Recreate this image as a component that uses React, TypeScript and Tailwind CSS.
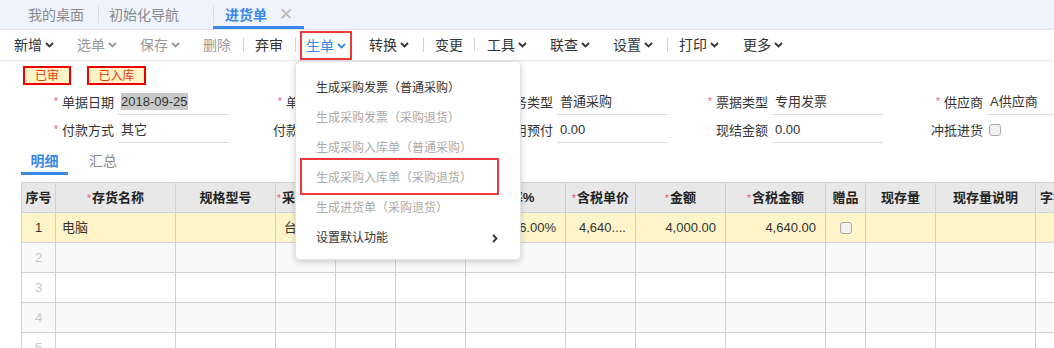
import React from "react";

const ChevronDown: React.FC<{ className?: string }> = ({ className }) => (
  <svg width="9" height="6" viewBox="0 0 9 6" className={className}>
    <path d="M1 1l3.5 3.5L8 1" fill="none" stroke="currentColor" strokeWidth="1.9" />
  </svg>
);

const Checkbox: React.FC = () => (
  <span className="inline-block h-[12px] w-[12px] rounded-[3px] border border-[#a8a8a8] bg-[#f1f1f1] align-middle" />
);

type ToolItem = { label?: string; sep?: boolean; chevron?: boolean; cls: string };

// toolbar, left margins written out so positions follow the screenshot
const tools: ToolItem[] = [
  { label: "新增", chevron: true, cls: "ml-[14px] text-[#333]" },
  { label: "选单", chevron: true, cls: "ml-[23px] text-[#9a9a9a]" },
  { label: "保存", chevron: true, cls: "ml-[23px] text-[#9a9a9a]" },
  { label: "删除", cls: "ml-[23px] text-[#9a9a9a]" },
  { sep: true, cls: "ml-[12px]" },
  { label: "弃审", cls: "ml-[11px] text-[#333]" },
  { label: "转换", chevron: true, cls: "ml-[17px] text-[#333]" },
  { sep: true, cls: "ml-[14px]" },
  { label: "变更", cls: "ml-[11px] text-[#333]" },
  { sep: true, cls: "ml-[11px]" },
  { label: "工具", chevron: true, cls: "ml-[12px] text-[#333]" },
  { label: "联查", chevron: true, cls: "ml-[23px] text-[#333]" },
  { label: "设置", chevron: true, cls: "ml-[23px] text-[#333]" },
  { sep: true, cls: "ml-[14px]" },
  { label: "打印", chevron: true, cls: "ml-[11px] text-[#333]" },
  { label: "更多", chevron: true, cls: "ml-[24px] text-[#333]" },
];

const menuItems = [
  { label: "生成采购发票（普通采购）", enabled: true },
  { label: "生成采购发票（采购退货）", enabled: false },
  { label: "生成采购入库单（普通采购）", enabled: false },
  { label: "生成采购入库单（采购退货）", enabled: false },
  { label: "生成进货单（采购退货）", enabled: false },
];

type Field = { label: string; value?: string; required?: boolean; check?: boolean; selected?: boolean };

const formRows: Field[][] = [
  [
    { label: "单据日期", value: "2018-09-25", required: true, selected: true },
    { label: "单据编号", value: "", required: true },
    { label: "业务类型", value: "普通采购" },
    { label: "票据类型", value: "专用发票", required: true },
    { label: "供应商", value: "A供应商", required: true },
  ],
  [
    { label: "付款方式", value: "其它", required: true },
    { label: "付款到期日", value: "" },
    { label: "使用预付", value: "0.00" },
    { label: "现结金额", value: "0.00" },
    { label: "冲抵进货", check: true },
  ],
];

const columns = [
  { label: "序号", w: "w-[34px]" },
  { label: "存货名称", w: "w-[120px]", req: true },
  { label: "规格型号", w: "w-[100px]" },
  { label: "采购单位", w: "w-[60px]", req: true },
  { label: "数量", w: "w-[60px]", req: true },
  { label: "单价", w: "w-[70px]" },
  { label: "税率%", w: "w-[100px]" },
  { label: "含税单价", w: "w-[70px]", req: true },
  { label: "金额", w: "w-[90px]", req: true },
  { label: "含税金额", w: "w-[100px]", req: true },
  { label: "赠品", w: "w-[40px]" },
  { label: "现存量", w: "w-[70px]" },
  { label: "现存量说明", w: "w-[100px]" },
  { label: "字符型自定义项", w: "w-[100px]" },
];

const App: React.FC = () => {
  return (
    <div className="relative h-[348px] w-[1054px] overflow-hidden bg-white font-['Liberation_Sans','Noto_Sans_CJK_SC',sans-serif] text-[#333]">
      {/* Page tabs */}
      <div className="flex h-[30px] items-stretch border-b border-[#dfe4ec] bg-[#eef3fc] text-[14px] leading-none">
        <div className="flex items-center pl-[28px] pr-[14px] text-[#8a8a8a]">我的桌面</div>
        <div className="my-[6px] w-px bg-[#d8dde6]" />
        <div className="flex items-center pl-[10px] pr-[34px] text-[#8a8a8a]">初始化导航</div>
        <div className="my-[6px] w-px bg-[#d8dde6]" />
        <div className="-ml-px flex items-center border-b-[3px] border-[#3a87e8] pl-[12px] pr-[11px] pt-[3px] font-bold text-[#3a87e8]">
          进货单
          <span className="ml-[12px] text-[17px] font-normal text-[#bbb]">✕</span>
        </div>
      </div>

      {/* Toolbar */}
      <div className="relative flex h-[30px] items-center text-[14px] leading-none shadow-[0_1px_2px_rgba(0,0,0,0.12)]">
        {tools.map((t, i) => {
          if (t.sep) return <div key={i} className={`h-[14px] w-px bg-[#d4d4d4] ${t.cls}`} />;
          const node = (
            <div key={i} className={`flex items-center ${t.cls}`}>
              {t.label}
              {t.chevron && <ChevronDown className="ml-[3px]" />}
            </div>
          );
          if (t.label === "弃审") {
            return (
              <React.Fragment key={i}>
                {node}
                <div className="ml-[12px] h-[14px] w-px bg-[#d4d4d4]" />
                <div className="ml-[4px] flex h-[29px] w-[52px] items-center justify-center border-2 border-[#f03a3a] pt-[1px] text-[#3a87e8]">
                  生单
                  <ChevronDown className="ml-[3px]" />
                </div>
              </React.Fragment>
            );
          }
          return node;
        })}
      </div>

      {/* Status badges */}
      <div className="mt-[6px] flex h-[19px] items-center text-[12px] leading-none">
        <span className="ml-[23px] flex h-[19px] w-[48px] items-center justify-center border-2 border-[#e00] bg-[#fff4c6] text-[#e8380d]">
          已审
        </span>
        <span className="ml-[16px] flex h-[19px] w-[59px] items-center justify-center border-2 border-[#e00] bg-[#fff4c6] text-[#e8380d]">
          已入库
        </span>
      </div>

      {/* Header fields */}
      <div className="mt-[3px] text-[13px] leading-none">
        {formRows.map((row, ri) => (
          <div key={ri} className="flex h-[28px] pl-[13px]">
            {row.map((f, fi) => (
              <div key={fi} className={`flex shrink-0 items-stretch ${fi === 0 ? "w-[224px]" : "w-[215px]"}`}>
                <div className="flex w-[101px] shrink-0 items-center justify-end">
                  {f.required && <span className="mr-[4px] text-[10px] text-[#f0506e]">*</span>}
                  {f.label}
                </div>
                {f.check ? (
                  <div className="ml-[6px] flex items-center">
                    <Checkbox />
                  </div>
                ) : (
                  <div className="ml-[4px] flex h-[27px] w-[111px] shrink-0 items-center border-b border-[#dcdcdc] pl-[3px]">
                    {f.selected ? <span className="bg-[#c8c8c8] py-[2px]">{f.value}</span> : f.value}
                  </div>
                )}
              </div>
            ))}
          </div>
        ))}
      </div>

      {/* Detail tabs */}
      <div className="mt-[2px] flex h-[29px] items-stretch pl-[21px] text-[14px] leading-none">
        <div className="flex w-[47px] items-center justify-center border-b-[3px] border-[#3a87e8] pt-[3px] font-bold text-[#3a87e8]">
          明细
        </div>
        <div className="ml-[21px] flex items-center text-[#888]">汇总</div>
      </div>

      {/* Detail grid */}
      <div className="mt-[7px] pl-[21px]">
        <table className="w-[1114px] table-fixed border-collapse text-[13px] leading-none">
          <colgroup>
            {columns.map((c, i) => (
              <col key={i} className={c.w} />
            ))}
          </colgroup>
          <thead>
            <tr className="h-[30px] bg-[#e8e8e8]">
              {columns.map((c, i) => (
                <th key={i} className="overflow-hidden whitespace-nowrap border border-[#d0d0d0] px-0 text-center font-bold text-[#222]">
                  {c.req && <span className="mr-[1px] text-[10px] font-normal text-[#f0506e]">*</span>}
                  {c.label}
                </th>
              ))}
            </tr>
          </thead>
          <tbody>
            <tr className="h-[30px] bg-[#fff5c9]">
              <td className="border border-[#d0d0d0] text-center">1</td>
              <td className="border border-[#d0d0d0] pl-[6px]">电脑</td>
              <td className="border border-[#d0d0d0]"></td>
              <td className="border border-[#d0d0d0] pl-[8px]">台</td>
              <td className="border border-[#d0d0d0] pr-[8px] text-right">1.00</td>
              <td className="border border-[#d0d0d0] pr-[8px] text-right">4,000.00</td>
              <td className="border border-[#d0d0d0] pr-[9px] text-right">16.00%</td>
              <td className="whitespace-nowrap border border-[#d0d0d0] pl-[13px]">4,640....</td>
              <td className="border border-[#d0d0d0] pr-[9px] text-right">4,000.00</td>
              <td className="border border-[#d0d0d0] pr-[9px] text-right">4,640.00</td>
              <td className="border border-[#d0d0d0] text-center">
                <Checkbox />
              </td>
              <td className="border border-[#d0d0d0]"></td>
              <td className="border border-[#d0d0d0]"></td>
              <td className="border border-[#d0d0d0]"></td>
            </tr>
            {[2, 3, 4, 5].map((n) => (
              <tr key={n} className={`h-[30px] ${n % 2 === 0 ? "bg-[#f9f9f9]" : "bg-white"}`}>
                <td className="border border-[#d0d0d0] text-center text-[#c8c8c8]">{n}</td>
                {columns.slice(1).map((_, i) => (
                  <td key={i} className="border border-[#d0d0d0]"></td>
                ))}
              </tr>
            ))}
          </tbody>
        </table>
      </div>

      {/* 生单 dropdown */}
      <div className="absolute left-[295px] top-[61px] h-[199px] w-[226px] rounded-[4px] border border-[#e2e2e2] bg-white pt-[11px] text-[12px] leading-none shadow-[0_2px_6px_rgba(0,0,0,0.18)]">
        {menuItems.map((m, i) => (
          <div key={i} className={`flex h-[30px] items-center pl-[20px] ${m.enabled ? "text-[#333]" : "text-[#aaa]"}`}>
            {m.label}
          </div>
        ))}
        <div className="flex h-[30px] items-center justify-between pl-[20px] pr-[22px] text-[#333]">
          设置默认功能
          <svg width="6" height="9" viewBox="0 0 6 9">
            <path d="M1 1l3.5 3.5L1 8" fill="none" stroke="#333" strokeWidth="1.8" />
          </svg>
        </div>
        <div className="absolute left-[4px] top-[96px] h-[37px] w-[199px] border-2 border-[#f03a3a]" />
      </div>
    </div>
  );
};

export default App;
